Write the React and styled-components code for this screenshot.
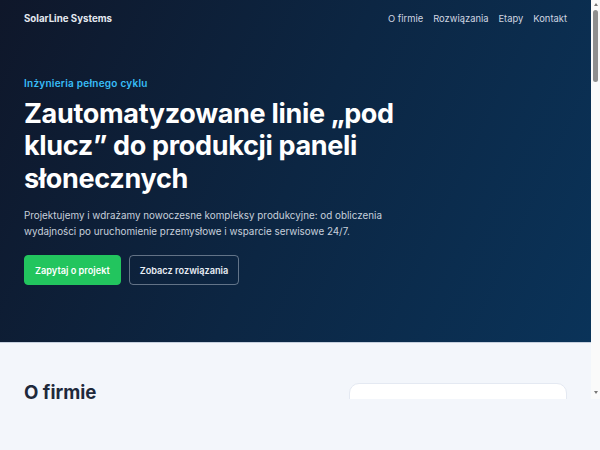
import React from 'react';
import styled, { createGlobalStyle } from 'styled-components';

const GlobalStyle = createGlobalStyle`
  * { box-sizing: border-box; }
  html, body {
    margin: 0;
    height: 450px;
    overflow: hidden;
    background: #f3f6fb;
    font-family: Inter, "Noto Sans", "Liberation Sans", sans-serif;
  }
`;

// the window of the page: content on the left, its scroll rail on the right
const Frame = styled.div`
  display: flex;
  height: 399px;
`;

const Page = styled.main`
  flex: 1;
  min-width: 0;
  overflow: hidden;
  background: #f3f6fb;
`;

const ScrollRail = styled.div`
  flex: none;
  width: 9px;
  background: #fafafa;
  display: flex;
  flex-direction: column;
  align-items: center;
  padding: 3px 0 5px;
`;

const RailArrow = styled.div`
  width: 0;
  height: 0;
  border-left: 2.5px solid transparent;
  border-right: 2.5px solid transparent;
  ${(p) =>
    p.$down
      ? 'border-top: 3px solid #777; margin-top: auto;'
      : 'border-bottom: 3px solid #777;'}
`;

const Thumb = styled.div`
  width: 5px;
  height: 72px;
  margin-top: 4px;
  border-radius: 3px;
  background: #8e8e8e;
`;

const Hero = styled.header`
  background: linear-gradient(115deg, #0f172a 0%, #0c2643 50%, #0a3359 100%);
  border-bottom: 1px solid #c6d0de;
  color: #fff;
`;

const TopBar = styled.nav`
  height: 36px;
  padding: 0 24px;
  display: flex;
  align-items: center;
  justify-content: space-between;
`;

const Brand = styled.div`
  font-size: 9.7px;
  font-weight: 700;
  color: #e5e9f0;
`;

const NavLinks = styled.div`
  display: flex;
  gap: 10px;
`;

const NavLink = styled.a`
  font-size: 9.4px;
  color: #cfd6e1;
  text-decoration: none;
`;

const HeroBody = styled.div`
  padding: 41px 24px 57px;
`;

const Eyebrow = styled.div`
  font-size: 10px;
  line-height: 12px;
  font-weight: 600;
  letter-spacing: 0.25px;
  color: #38bdf8;
  margin-bottom: 9px;
`;

const Title = styled.h1`
  margin: 0 0 12px;
  max-width: 400px;
  font-size: 27px;
  line-height: 32.4px;
  font-weight: 700;
  letter-spacing: -0.012em;
  color: #fff;
`;

const Lead = styled.p`
  margin: 0 0 16px;
  max-width: 380px;
  font-size: 9.85px;
  line-height: 16px;
  color: #c7d0dc;
`;

const Actions = styled.div`
  display: flex;
  gap: 8px;
`;

const Button = styled.a`
  display: inline-flex;
  align-items: center;
  justify-content: center;
  height: 30px;
  padding: 0 10px;
  border-radius: 4px;
  font-size: 9.2px;
  font-weight: 600;
  text-decoration: none;
  color: ${(p) => (p.$primary ? '#fff' : '#e8edf4')};
  background: ${(p) => (p.$primary ? '#22c55e' : 'transparent')};
  border: 1px solid ${(p) => (p.$primary ? '#22c55e' : 'rgba(203, 213, 225, 0.45)')};
`;

const Section = styled.section`
  padding: 39px 24px 40px;
`;

const Split = styled.div`
  display: grid;
  grid-template-columns: 1fr 218px;
  gap: 24px;
  align-items: start;
`;

const SectionTitle = styled.h2`
  margin: 0;
  font-size: 18.7px;
  line-height: 1.2;
  font-weight: 700;
  color: #1e293b;
`;

const Card = styled.div`
  margin-top: 1px;
  min-height: 160px;
  background: #fff;
  border: 1px solid #e4e9f2;
  border-radius: 10px;
`;

export default function App() {
  return (
    <>
      <GlobalStyle />
      <Frame>
        <Page>
          <Hero>
            <TopBar>
              <Brand>SolarLine Systems</Brand>
              <NavLinks>
                <NavLink href="#o-firmie">O firmie</NavLink>
                <NavLink href="#rozwiazania">Rozwiązania</NavLink>
                <NavLink href="#etapy">Etapy</NavLink>
                <NavLink href="#kontakt">Kontakt</NavLink>
              </NavLinks>
            </TopBar>
            <HeroBody>
              <Eyebrow>Inżynieria pełnego cyklu</Eyebrow>
              <Title>Zautomatyzowane linie „pod klucz” do produkcji paneli słonecznych</Title>
              <Lead>
                Projektujemy i wdrażamy nowoczesne kompleksy produkcyjne: od obliczenia wydajności po
                uruchomienie przemysłowe i wsparcie serwisowe 24/7.
              </Lead>
              <Actions>
                <Button $primary href="#kontakt">Zapytaj o projekt</Button>
                <Button href="#rozwiazania">Zobacz rozwiązania</Button>
              </Actions>
            </HeroBody>
          </Hero>

          <Section id="o-firmie">
            <Split>
              <SectionTitle>O firmie</SectionTitle>
              <Card />
            </Split>
          </Section>
        </Page>
        <ScrollRail>
          <RailArrow />
          <Thumb />
          <RailArrow $down />
        </ScrollRail>
      </Frame>
    </>
  );
}
